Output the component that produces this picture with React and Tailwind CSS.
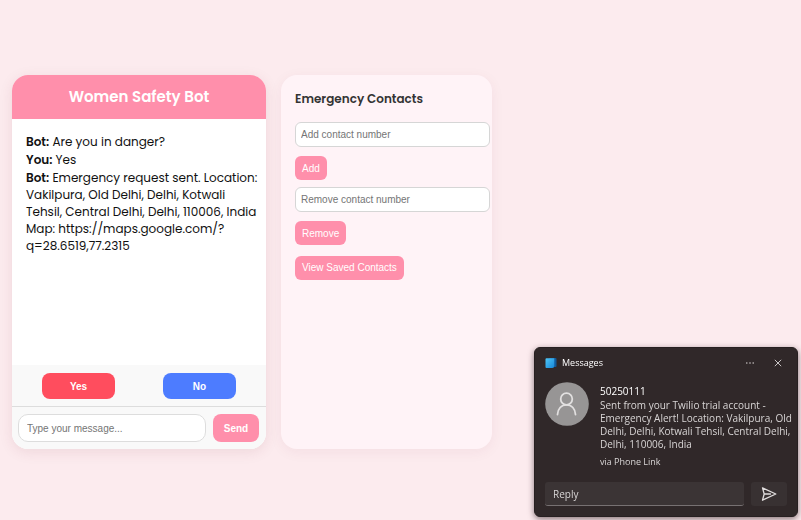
import React from "react";

const messages = [
  { from: "Bot", text: "Are you in danger?" },
  { from: "You", text: "Yes" },
  {
    from: "Bot",
    text: "Emergency request sent. Location: Vakilpura, Old Delhi, Delhi, Kotwali Tehsil, Central Delhi, Delhi, 110006, India",
    map: "Map: https://maps.google.com/?q=28.6519,77.2315",
  },
];

function ChatCard() {
  return (
    <section className="flex w-[254px] shrink-0 flex-col overflow-hidden rounded-2xl bg-white shadow-[0_3px_14px_rgba(120,40,60,0.10)]">
      <h1 className="bg-[#ff8fab] py-2.5 text-center text-[15px] leading-6 font-semibold text-white">
        Women Safety Bot
      </h1>
      <div className="flex min-h-[246px] grow flex-col gap-px py-3.5 pr-1.5 pl-3.5 text-xs leading-[17px] text-[#111]">
        {messages.map((m, i) => (
          <p key={i}>
            <b className="font-semibold">{m.from}:</b> {m.text}
            {m.map && (
              <>
                <br />
                {m.map}
              </>
            )}
          </p>
        ))}
      </div>
      <div className="flex justify-center gap-12 bg-[#f9f9f9] pt-2 pb-[7px] font-['Liberation_Sans',Arial,sans-serif] text-[10px] font-bold text-white">
        <button className="h-[26px] w-[73px] rounded-lg bg-[#ff4d5e]">Yes</button>
        <button className="h-[26px] w-[73px] rounded-lg bg-[#4d7cff]">No</button>
      </div>
      <form className="flex gap-[7px] border-t border-[#dddddd] bg-[#f9f9f9] py-[7px] pr-[7px] pl-1.5 font-['Liberation_Sans',Arial,sans-serif]">
        <input
          aria-label="Your message"
          placeholder="Type your message..."
          className="h-7 min-w-0 grow rounded-[10px] border border-[#dddddd] bg-white px-2 text-[10px] placeholder:text-[#757575]"
        />
        <button type="button" className="h-7 w-[46px] rounded-lg bg-[#ff8fab] text-[10px] font-bold text-white">
          Send
        </button>
      </form>
    </section>
  );
}

const field =
  "h-[25px] w-[195px] rounded-md border border-[#d6d6d6] bg-white px-[5px] text-[10px] placeholder:text-[#757575]";
const action = "h-6 rounded-md bg-[#ff8fab] px-[7px] text-[10px] text-white";

function ContactForm({ label, submit }) {
  return (
    <form className="flex flex-col items-start gap-[9px]">
      <input aria-label={label} placeholder={label} className={field} />
      <button type="button" className={action}>
        {submit}
      </button>
    </form>
  );
}

function ContactsCard() {
  return (
    <section className="w-[211px] shrink-0 rounded-2xl bg-[#fff3f7] py-3.5 pl-3.5 shadow-[0_3px_14px_rgba(120,40,60,0.06)]">
      <h2 className="text-xs leading-5 font-semibold text-[#333]">Emergency Contacts</h2>
      <div className="mt-[13px] flex flex-col items-start gap-[7px] font-['Liberation_Sans',Arial,sans-serif]">
        <ContactForm label="Add contact number" submit="Add" />
        <ContactForm label="Remove contact number" submit="Remove" />
        <div className="pt-0.5">
          <button className={action}>View Saved Contacts</button>
        </div>
      </div>
    </section>
  );
}

function MessageIcon() {
  return (
    <svg viewBox="0 0 12 12" className="h-3 w-3" aria-hidden="true">
      <defs>
        <linearGradient id="phone" x1="0" y1="0" x2="1" y2="1">
          <stop offset="0" stopColor="#4fc6f6" />
          <stop offset="1" stopColor="#1787d8" />
        </linearGradient>
      </defs>
      <rect x="4" y="1" width="7.5" height="9" rx="1" fill="#115a9c" />
      <path d="M1.500 1.300h7.800v7.700a2 2 0 0 1-2 2H1.500a1 1 0 0 1-1-1V2.300a1 1 0 0 1 1-1z" fill="url(#phone)" />
    </svg>
  );
}

function Toast() {
  return (
    <aside className="fixed right-[3px] bottom-[3px] w-[264px] rounded-md border border-[#272021] bg-[#302829] px-2.5 pt-[7px] pb-2.5 font-['Open_Sans','Noto_Sans',sans-serif] text-[10px] text-[#d8d5d5] shadow-[0_2px_6px_rgba(40,20,25,0.55)]">
      <header className="flex h-4 items-center">
        <MessageIcon />
        <span className="ml-[5px] grow text-[9px] text-white">Messages</span>
        <button aria-label="More options" className="mr-[18px] text-[#c9c5c5]">
          <svg viewBox="0 0 10 10" className="h-2.5 w-2.5" fill="currentColor">
            <circle cx="1.8" cy="5" r=".8" />
            <circle cx="5" cy="5" r=".8" />
            <circle cx="8.2" cy="5" r=".8" />
          </svg>
        </button>
        <button aria-label="Close" className="mr-1 text-[#c9c5c5]">
          <svg viewBox="0 0 10 10" className="h-2.5 w-2.5" fill="none" stroke="currentColor">
            <path d="M1.8 1.8l6.4 6.4M8.2 1.8L1.8 8.2" />
          </svg>
        </button>
      </header>
      <div className="mt-[11px] -mr-2 flex gap-[11px]">
        <svg viewBox="0 0 44 44" className="h-11 w-11 shrink-0" fill="none" role="img" aria-label="Contact">
          <circle cx="22" cy="22" r="21.8" fill="#979595" />
          <g stroke="#e2e0e0" strokeWidth="1.8" strokeLinecap="round">
            <circle cx="21.5" cy="17" r="5.8" />
            <path d="M12.500 32.500c.3-5.700 3.800-9.700 9-9.700s8.700 4 9 9.700" />
          </g>
        </svg>
        <div className="pt-0.5">
          <p className="leading-[14px] text-white">50250111</p>
          <p className="mt-px leading-[13px]">
            Sent from your Twilio trial account - Emergency Alert! Location: Vakilpura, Old Delhi, Delhi, Kotwali
            Tehsil, Central Delhi, Delhi, 110006, India
          </p>
          <p className="mt-1 text-[9px] leading-[14px]">via Phone Link</p>
        </div>
      </div>
      <form className="mt-[13px] flex gap-[7px]">
        <input
          aria-label="Reply"
          placeholder="Reply"
          className="h-6 min-w-0 grow rounded-[3px] border-b border-[#777172] bg-[#3b3435] px-2 placeholder:text-[#d8d5d5]"
        />
        <button type="button" aria-label="Send reply" className="flex h-6 w-9 items-center justify-center rounded-[3px] bg-[#383132] text-[#e0dddd]">
          <svg viewBox="0 0 16 16" className="h-4 w-4" fill="none" stroke="currentColor" strokeWidth="1.3" strokeLinejoin="round" strokeLinecap="round">
            <path d="M1.500 1.800L14.800 8L1.500 14.200L3.200 8zM3.200 8H9.500" />
          </svg>
        </button>
      </form>
    </aside>
  );
}

export default function App() {
  return (
    <div className="min-h-screen bg-[#fcebee] font-['Poppins','Inter',sans-serif]">
      <main className="flex gap-[15px] px-3 pt-[75px] pb-16">
        <ChatCard />
        <ContactsCard />
      </main>
      <Toast />
    </div>
  );
}
